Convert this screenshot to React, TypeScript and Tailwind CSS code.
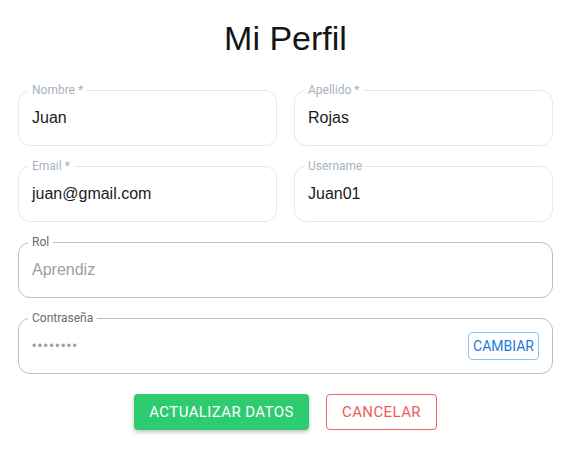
import React from "react";

type FieldProps = {
  label: string;
  value: string;
  muted?: boolean;
  password?: boolean;
  action?: React.ReactNode;
};

const Field = ({ label, value, muted, password, action }: FieldProps) => {
  const borderColor = muted ? "border-[#bdbdbd]" : "border-[#e3e8ef]";
  const labelColor = muted ? "text-[#666b73]" : "text-[#a7b2c1]";
  const valueColor = muted ? "text-[#9e9e9e]" : "text-[#1a1a1a]";
  return (
    <div className={`relative h-[56px] rounded-[12px] border ${borderColor} flex items-center pl-[13px] pr-[13px]`}>
      <span
        className={`absolute left-[9px] -top-[7px] bg-white px-[4px] text-[12px] leading-[12px] font-['Roboto',sans-serif] ${labelColor}`}
      >
        {label}
      </span>
      <span
        className={`flex-1 font-['Liberation_Sans',Arial,sans-serif] ${password ? "text-[12px] tracking-[1.6px] text-[#9aa0a8]" : `text-[16px] ${valueColor}`}`}
      >
        {value}
      </span>
      {action}
    </div>
  );
};

export default function App() {
  return (
    <div className="w-[575px] h-[468px] bg-white pl-[18px] pr-[22px] pt-[18px] box-border">
      <h1 className="text-center text-[34px] leading-[40px] text-[#151515] font-['Liberation_Sans',Arial,sans-serif]">
        Mi Perfil
      </h1>
      <div className="mt-[32px] flex flex-col gap-[20px]">
        <div className="grid grid-cols-2 gap-[17px]">
          <Field label="Nombre *" value="Juan" />
          <Field label="Apellido *" value="Rojas" />
        </div>
        <div className="grid grid-cols-2 gap-[17px]">
          <Field label="Email *" value="juan@gmail.com" />
          <Field label="Username" value="Juan01" />
        </div>
        <Field label="Rol" value="Aprendiz" muted />
        <Field
          label="Contraseña"
          value="••••••••"
          muted
          password
          action={
            <button className="h-[28px] px-[4px] rounded-[4px] border border-[#90c2f5] text-[#1e7ad6] text-[14px] font-['Roboto',sans-serif] leading-none">
              CAMBIAR
            </button>
          }
        />
      </div>
      <div className="mt-[20px] flex justify-center gap-[17px] font-['Roboto',sans-serif] tracking-[0.4px]">
        <button className="h-[36px] w-[175px] rounded-[4px] bg-[#2ecc71] text-white text-[15px] shadow-[0_2px_4px_rgba(0,0,0,0.25)]">
          ACTUALIZAR DATOS
        </button>
        <button className="h-[36px] w-[111px] rounded-[4px] border border-[#f06666] text-[#f05a5a] text-[15px]">
          CANCELAR
        </button>
      </div>
    </div>
  );
}
